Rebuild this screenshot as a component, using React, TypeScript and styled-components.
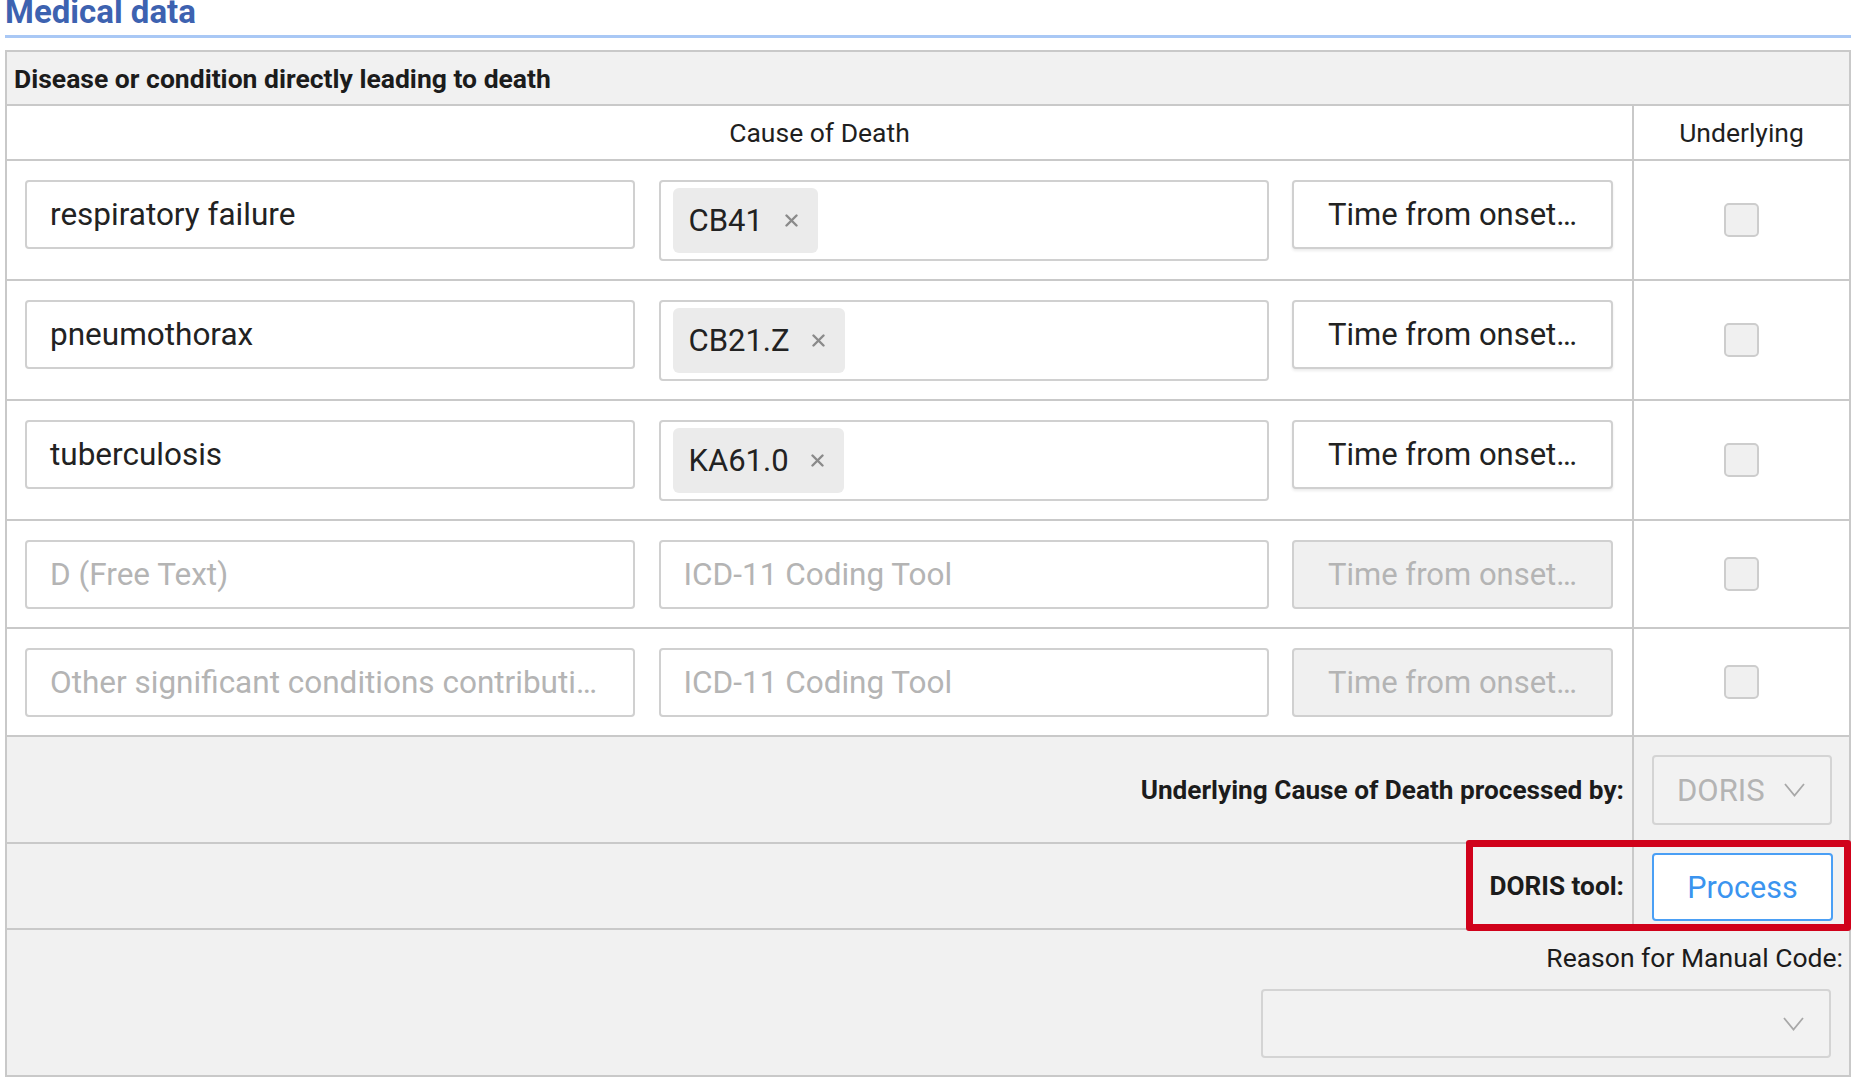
import React from 'react';
import styled, { createGlobalStyle } from 'styled-components';

const GlobalStyle = createGlobalStyle`
  html, body {
    margin: 0;
    padding: 0;
    background: #ffffff;
    font-family: Roboto, "Liberation Sans", sans-serif;
    color: #1f1f1f;
    overflow: hidden;
  }
  * {
    box-sizing: border-box;
  }
`;

const Page = styled.div`
  padding: 0 13px 9px 5px;
`;

const Title = styled.h2`
  margin: -4px 0 0;
  padding-bottom: 7px;
  border-bottom: 3px solid #a9c8f5;
  font-size: 33px;
  line-height: 32px;
  font-weight: 700;
  color: #3d62b0;
`;

const Table = styled.div`
  margin-top: 12px;
  border: 2px solid #c9c9c9;
  border-bottom: none;
`;

const SectionHeader = styled.div`
  height: 54px;
  display: flex;
  align-items: center;
  padding-left: 7px;
  background: #f1f1f1;
  border-bottom: 2px solid #c9c9c9;
  font-size: 26.5px;
  font-weight: 700;
  color: #1c1c1c;
`;

const Row = styled.div<{ $grey?: boolean }>`
  display: grid;
  grid-template-columns: 1fr 217px;
  background: ${p => (p.$grey ? '#f1f1f1' : '#ffffff')};
  border-bottom: 2px solid #c9c9c9;
  position: relative;
`;

const HeadCell = styled.div<{ $divider?: boolean }>`
  height: 53px;
  display: flex;
  align-items: center;
  justify-content: center;
  font-size: 26.5px;
  color: #1f1f1f;
  border-left: ${p => (p.$divider ? '2px solid #c9c9c9' : 'none')};
`;

const FieldsCell = styled.div`
  display: grid;
  grid-template-columns: 1fr 1fr 321px;
  column-gap: 23.5px;
  align-items: start;
  padding: 19px 19px 18px 18px;
`;

const CheckCell = styled.div`
  display: flex;
  align-items: center;
  justify-content: center;
  border-left: 2px solid #c9c9c9;
`;

const TextBox = styled.div<{ $placeholder?: boolean }>`
  height: 69px;
  display: flex;
  align-items: center;
  padding: 0 23px;
  border: 2px solid #d0d0d0;
  border-radius: 4px;
  background: #ffffff;
  font-size: 31.5px;
  color: ${p => (p.$placeholder ? '#b4b4b4' : '#222222')};
  white-space: nowrap;
  overflow: hidden;
`;

const CodeBox = styled.div<{ $filled?: boolean }>`
  min-height: 69px;
  display: flex;
  align-items: center;
  padding: ${p => (p.$filled ? '6px 12px' : '0 23px')};
  border: 2px solid #d0d0d0;
  border-radius: 4px;
  background: #ffffff;
  font-size: 31.5px;
  color: #b4b4b4;
  white-space: nowrap;
`;

const Chip = styled.div`
  height: 65px;
  display: inline-flex;
  align-items: center;
  gap: 22px;
  padding: 0 20px 0 16px;
  border-radius: 6px;
  background: #ebebeb;
  font-size: 31px;
  color: #222222;
`;

const TimeBox = styled.div<{ $disabled?: boolean }>`
  height: 69px;
  display: flex;
  align-items: center;
  justify-content: center;
  border: 2px solid #d0d0d0;
  border-radius: 4px;
  background: ${p => (p.$disabled ? '#f0f0f0' : '#ffffff')};
  box-shadow: ${p => (p.$disabled ? 'none' : '0 2px 3px rgba(0, 0, 0, 0.08)')};
  font-size: 31px;
  color: ${p => (p.$disabled ? '#b4b4b4' : '#222222')};
  white-space: nowrap;
`;

const CheckBox = styled.span`
  width: 35px;
  height: 34px;
  border: 2px solid #cdcdcd;
  border-radius: 5px;
  background: #f0f0f0;
`;

const LabelCell = styled.div<{ $bold?: boolean }>`
  display: flex;
  align-items: center;
  justify-content: flex-end;
  padding-right: 8px;
  font-size: 26.2px;
  font-weight: ${p => (p.$bold ? 700 : 400)};
  color: #1c1c1c;
`;

const ControlCell = styled.div<{ $pad: string }>`
  border-left: 2px solid #c9c9c9;
  padding: ${p => p.$pad};
`;

const Select = styled.div<{ $h: number }>`
  height: ${p => p.$h}px;
  display: flex;
  align-items: center;
  justify-content: space-between;
  padding: 0 25px 0 23px;
  border: 2px solid #d4d4d4;
  border-radius: 4px;
  background: #f2f2f2;
  font-size: 31px;
  color: #b4b4b4;
`;

const ProcessButton = styled.button`
  width: 181px;
  height: 68px;
  border: 2px solid #4a9ff5;
  border-radius: 4px;
  background: #ffffff;
  font-family: inherit;
  font-size: 30.5px;
  color: #3b94ef;
  padding: 0;
`;

const Highlight = styled.div`
  position: absolute;
  top: -4px;
  right: -2px;
  width: 385px;
  height: 91px;
  border: 7px solid #d0021b;
  border-radius: 3px;
  pointer-events: none;
`;

const ReasonRow = styled.div`
  display: flex;
  flex-direction: column;
  align-items: flex-end;
  padding: 12px 18px 17px 0;
  background: #f1f1f1;
  border-bottom: 2px solid #c9c9c9;
`;

const ReasonLabel = styled.div`
  line-height: 32px;
  margin-right: -12px;
  font-size: 26.5px;
  color: #1c1c1c;
`;

const ReasonSelect = styled(Select)`
  width: 570px;
  margin-top: 15px;
  justify-content: flex-end;
`;

const Chevron = ({ color = '#a8a8a8' }: { color?: string }) => (
  <svg width="21" height="14" viewBox="0 0 21 14" fill="none">
    <polyline points="1,1 10.5,12.5 20,1" stroke={color} strokeWidth="1.8" />
  </svg>
);

const Cross = () => (
  <svg width="13" height="13" viewBox="0 0 13 13">
    <path d="M1.5 1.5 L11.5 11.5 M11.5 1.5 L1.5 11.5" stroke="#8a8a8a" strokeWidth="2.4" strokeLinecap="round" />
  </svg>
);

type Cause = { text?: string; code?: string; placeholder: string };

const causes: Cause[] = [
  { text: 'respiratory failure', code: 'CB41', placeholder: '' },
  { text: 'pneumothorax', code: 'CB21.Z', placeholder: '' },
  { text: 'tuberculosis', code: 'KA61.0', placeholder: '' },
  { placeholder: 'D (Free Text)' },
  { placeholder: 'Other significant conditions contributi…' },
];

export default function App() {
  return (
    <Page>
      <GlobalStyle />
      <Title>Medical data</Title>
      <Table>
        <SectionHeader>Disease or condition directly leading to death</SectionHeader>
        <Row>
          <HeadCell>Cause of Death</HeadCell>
          <HeadCell $divider>Underlying</HeadCell>
        </Row>

        {causes.map((c, i) => (
          <Row key={i}>
            <FieldsCell>
              <TextBox $placeholder={!c.text}>{c.text ?? c.placeholder}</TextBox>
              {c.code ? (
                <CodeBox $filled>
                  <Chip>
                    {c.code}
                    <Cross />
                  </Chip>
                </CodeBox>
              ) : (
                <CodeBox>ICD-11 Coding Tool</CodeBox>
              )}
              <TimeBox $disabled={!c.code}>Time from onset…</TimeBox>
            </FieldsCell>
            <CheckCell>
              <CheckBox />
            </CheckCell>
          </Row>
        ))}

        <Row $grey>
          <LabelCell $bold>Underlying Cause of Death processed by:</LabelCell>
          <ControlCell $pad="18px 17px 17px 18px">
            <Select $h={70}>
              DORIS
              <Chevron />
            </Select>
          </ControlCell>
        </Row>

        <Row $grey>
          <LabelCell $bold>DORIS tool:</LabelCell>
          <ControlCell $pad="9px 16px 7px 18px">
            <ProcessButton>Process</ProcessButton>
          </ControlCell>
          <Highlight />
        </Row>

        <ReasonRow>
          <ReasonLabel>Reason for Manual Code:</ReasonLabel>
          <ReasonSelect $h={69}>
            <Chevron />
          </ReasonSelect>
        </ReasonRow>
      </Table>
    </Page>
  );
}
